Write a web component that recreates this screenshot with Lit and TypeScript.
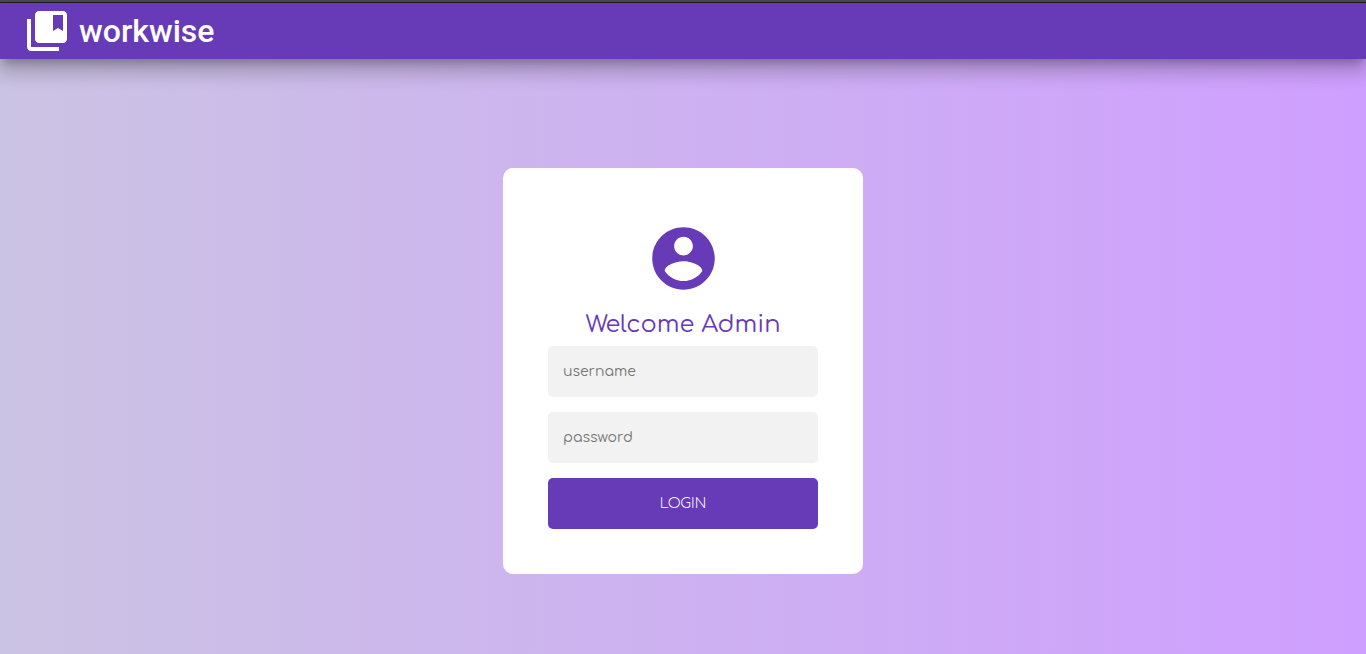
import { LitElement, html, css } from "lit";
import { customElement } from "lit/decorators.js";

@customElement("app-root")
export class AppRoot extends LitElement {
  static styles = css`
    :host {
      display: flex;
      flex-direction: column;
      min-height: 100vh;
      box-sizing: border-box;
      border-top: 2px solid #4d4d4d;
      background: linear-gradient(to right, #cbc3e3, #cf9fff);
      font-family: Comfortaa, "Open Sans", sans-serif;
    }
    .toolbar {
      display: flex;
      align-items: center;
      gap: 8px;
      height: 56px;
      padding: 0 23px;
      border-top: 1px solid #1c1a20;
      background: #673ab7;
      color: #fff;
      font: 500 32px/56px Roboto, sans-serif;
      box-shadow: 0 7px 8px -4px rgba(0, 0, 0, 0.2),
        0 12px 17px 2px rgba(0, 0, 0, 0.14),
        0 5px 22px 4px rgba(0, 0, 0, 0.12);
    }
    .logo {
      width: 48px;
      height: 48px;
      fill: currentColor;
    }
    .card {
      display: flex;
      flex-direction: column;
      gap: 15px;
      width: 360px;
      max-width: 100%;
      box-sizing: border-box;
      margin: 8% auto 32px;
      padding: 45px;
      border-radius: 10px;
      background: #fff;
    }
    .intro {
      display: flex;
      flex-direction: column;
      align-items: center;
      gap: 8px;
      padding-top: 8px;
      margin-bottom: -15px;
      color: #673ab7;
    }
    .avatar {
      width: 75px;
      height: 75px;
      fill: currentColor;
    }
    .title {
      margin: 0;
      font-size: 24px;
      font-weight: 400;
      line-height: 42px;
    }
    .field,
    .submit {
      width: 100%;
      height: 51px;
      box-sizing: border-box;
      padding: 15px;
      border: 0;
      border-radius: 5px;
      outline: 0;
      font-family: inherit;
      font-size: 14px;
      line-height: 21px;
    }
    .field {
      background: #f2f2f2;
      color: #333;
    }
    .field::placeholder {
      color: #757575;
    }
    .submit {
      background: #673ab7;
      color: #fff;
      font-weight: 300;
      text-transform: uppercase;
      cursor: pointer;
    }
  `;

  render() {
    return html`
      <header class="toolbar">
        <svg class="logo" viewBox="0 0 24 24" aria-hidden="true">
          <path d="M4 6H2v14c0 1.1.9 2 2 2h14v-2H4V6z" />
          <path
            d="M20 2H8c-1.1 0-2 .9-2 2v12c0 1.1.9 2 2 2h12c1.1 0 2-.9 2-2V4c0-1.1-.9-2-2-2zm0 10l-2.5-1.5L15 12V4h5v8z"
          />
        </svg>
        <span>workwise</span>
      </header>
      <form class="card" @submit=${(e: Event) => e.preventDefault()}>
        <div class="intro">
          <svg class="avatar" viewBox="0 0 24 24" aria-hidden="true">
            <path
              d="M12 2C6.48 2 2 6.48 2 12s4.48 10 10 10 10-4.48 10-10S17.52 2 12 2zm0 3c1.66 0 3 1.34 3 3s-1.34 3-3 3-3-1.34-3-3 1.34-3 3-3zm0 14.2c-2.5 0-4.71-1.28-6-3.22.03-1.99 4-3.08 6-3.08 1.99 0 5.97 1.09 6 3.08-1.29 1.94-3.5 3.22-6 3.22z"
            />
          </svg>
          <h1 class="title">Welcome Admin</h1>
        </div>
        <input class="field" type="text" placeholder="username" aria-label="username" />
        <input class="field" type="password" placeholder="password" aria-label="password" />
        <button class="submit" type="submit">Login</button>
      </form>
    `;
  }
}
